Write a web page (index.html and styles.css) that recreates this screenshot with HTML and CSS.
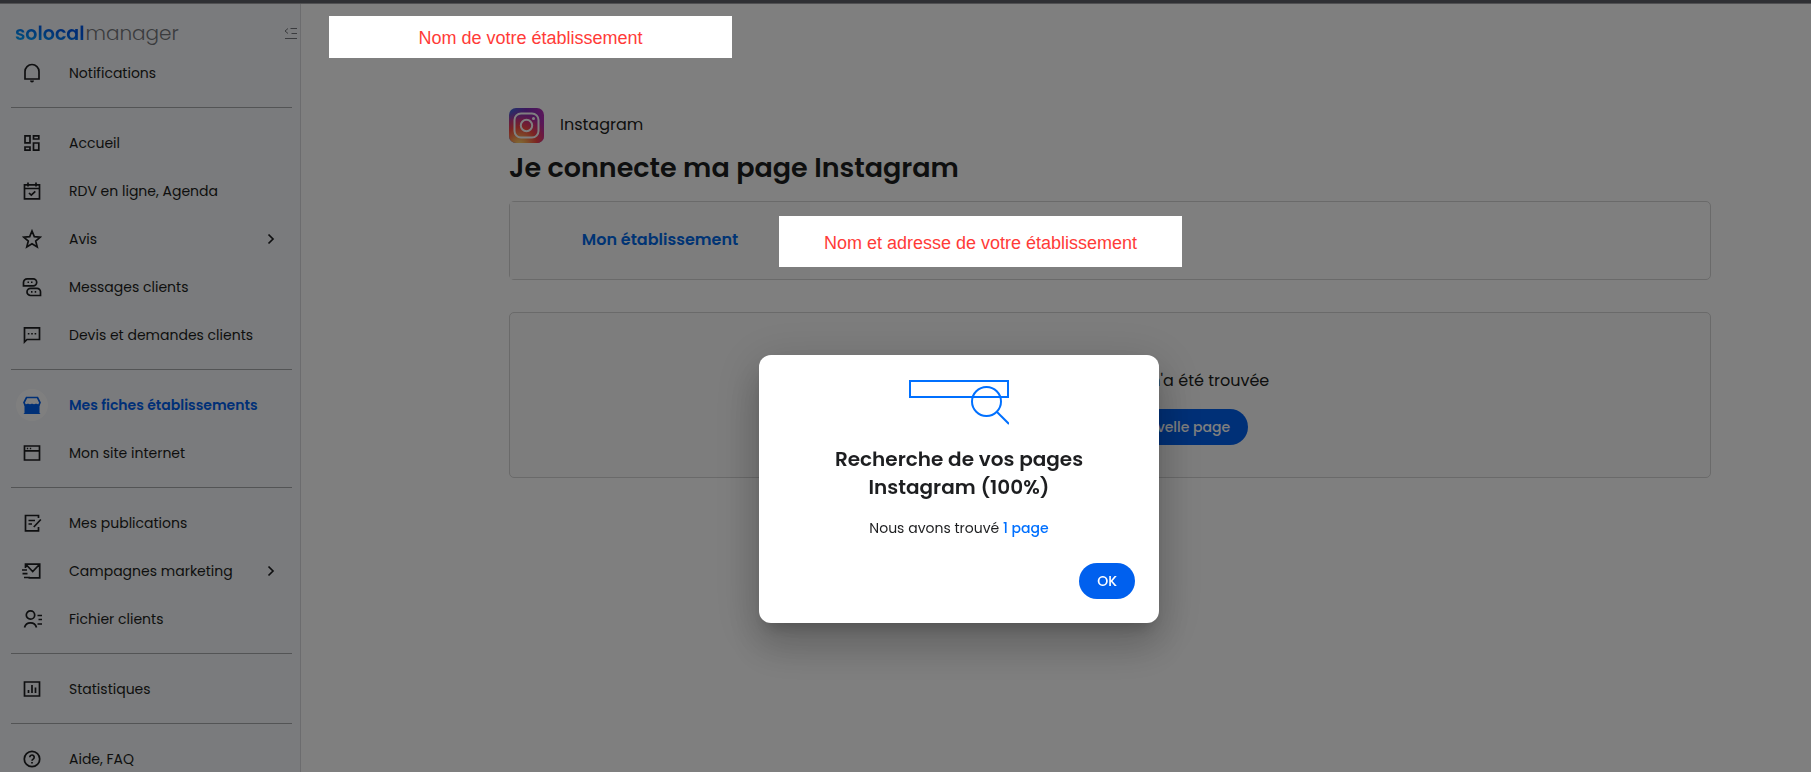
FILE: index.html
```html
<!DOCTYPE html>
<html lang="fr">
<head>
<meta charset="utf-8">
<title>Solocal Manager – Connexion Instagram</title>
<link rel="stylesheet" href="styles.css">
</head>
<body>
<div class="topbar"></div>
<div class="shell">
  <aside class="sidebar">
    <div class="brand">
      <a class="logo" href="#"><span class="logo-bold">solocal</span><span class="logo-light">manager</span></a>
      <button class="collapse" type="button" aria-label="Réduire le menu">
        <svg width="14" height="13" viewBox="0 0 14 13"><path d="M4 1.5 1 4l3 2.500M6.500 1.500H13M7.500 6.500H13M1 11.500h12"/></svg>
      </button>
    </div>
    <nav class="menu">
      <a class="item" href="#"><svg class="icon" viewBox="0 0 20 20"><path d="M3 16V8.500a7 7 0 0 1 14 0V16zM2.500 16h15"/><path class="solid" d="M8 17.500h4a2 2 0 0 1-4 0z"/></svg><span>Notifications</span></a>
      <hr>
      <a class="item" href="#"><svg class="icon" viewBox="0 0 20 20"><path d="M3 2.800h5v7H3zM3 14h5v3.200H3zM11.500 2.800h5.300V6h-5.300zM11.500 10h5.300v7.200h-5.300z"/></svg><span>Accueil</span></a>
      <a class="item" href="#"><svg class="icon" viewBox="0 0 20 20"><path d="M2.500 3.800h15v14h-15zM2.500 7.500h15M6 1.500v4M14 1.500v4M7 12l2.300 2.200 4-3.800"/></svg><span>RDV en ligne, Agenda</span></a>
      <a class="item" href="#"><svg class="icon" viewBox="0 0 20 20"><path d="m10 2 2.300 5.600 6 .5-4.600 3.900 1.500 5.900-5.200-3.200-5.200 3.200L6.300 12 1.700 8.100l6-.5z"/></svg><span>Avis</span><svg class="chevron" viewBox="0 0 8 12"><path d="m1.500 1.500 4.500 4.500-4.500 4.500"/></svg></a>
      <a class="item" href="#"><svg class="icon" viewBox="0 0 20 20"><path d="M1.500 8.800V5.500a3.700 3.700 0 0 1 3.700-3.700h6a3.500 3.500 0 0 1 0 7zM18.500 18.500v-3.700a3.500 3.500 0 0 0-3.500-3.500H8.600a3.600 3.600 0 0 0 0 7.200z"/><path class="solid" d="M5.500 4.500h1.500v1.600H5.500zM9 4.500h1.500v1.600H9zM9 14.100h1.500v1.600H9zM12.700 14.100h1.500v1.600h-1.500z"/></svg><span>Messages clients</span></a>
      <a class="item" href="#"><svg class="icon" viewBox="0 0 20 20"><path d="M2.500 17V2.800h15v11.700H5z"/><path class="solid" d="M5.800 8h1.600v1.600H5.800zM9.200 8h1.600v1.600H9.200zM12.600 8h1.600v1.600h-1.600z"/></svg><span>Devis et demandes clients</span></a>
      <hr>
      <a class="item active" href="#" aria-current="page"><span class="halo"><svg class="icon" viewBox="0 0 20 20"><path d="M4.500 2.500h11l2.500 5-1 2.500H3L2 7.500z"/><path class="solid" d="M2 8.500 3.500 10 6 8.500l2 1.200 2-1.200 2 1.200 2-1.200 2.500 1.500L18 8.500 17.500 11v7.200h.7v.8H1.800v-.8h.7V11z"/></svg></span><span>Mes fiches établissements</span></a>
      <a class="item" href="#"><svg class="icon" viewBox="0 0 20 20"><path d="M2.500 3h15v14h-15zM2.500 7.800h15"/><path class="solid" d="M4.800 4.800h1.400v1.400H4.800zM7.800 4.800h1.400v1.400H7.800z"/></svg><span>Mon site internet</span></a>
      <hr>
      <a class="item" href="#"><svg class="icon" viewBox="0 0 20 20"><path d="M16.500 5V2.500h-13v15.300h13V14M6.500 7.500h6.500M6.500 11h3.500M18.800 6.500l-7 7.500"/></svg><span>Mes publications</span></a>
      <a class="item" href="#"><svg class="icon" viewBox="0 0 20 20"><path d="M3.500 7V3.200h14.200v13.600H6.500M4 3.500l6.700 7 6.700-7M0 9h5M.5 12.700h5M2 16.500h6"/></svg><span>Campagnes marketing</span><svg class="chevron" viewBox="0 0 8 12"><path d="m1.500 1.500 4.500 4.500-4.500 4.500"/></svg></a>
      <a class="item" href="#"><svg class="icon" viewBox="0 0 20 20"><circle cx="8.500" cy="6" r="4.200"/><path d="M2.500 18.500a6.200 6.200 0 0 1 12 0M15.500 6.500h4.500M16.500 10.500h3.500M15.500 15h4.500"/></svg><span>Fichier clients</span></a>
      <hr>
      <a class="item" href="#"><svg class="icon" viewBox="0 0 20 20"><path d="M2.500 3h15v14h-15zM6.500 11v3M10 6v8M13.500 8.500V14"/></svg><span>Statistiques</span></a>
      <hr>
      <a class="item" href="#"><svg class="icon" viewBox="0 0 20 20"><circle cx="10" cy="10" r="7.700"/><path d="M7.800 8.200a2.200 2.200 0 1 1 3.600 1.700c-.9.600-1.400 1-1.400 1.900M10 13v1.500"/></svg><span>Aide, FAQ</span></a>
    </nav>
  </aside>

  <main class="main">
    <div class="note note-name">Nom de votre établissement</div>
    <section class="content">
      <div class="network">
        <svg class="insta" viewBox="0 0 35 35">
          <defs>
            <linearGradient id="ig-top" x1="0" y1="0" x2="1" y2="0"><stop offset="0" stop-color="#4168d8"/><stop offset=".5" stop-color="#7a30b8"/><stop offset="1" stop-color="#b52fb5"/></linearGradient>
            <radialGradient id="ig-warm" cx=".3" cy="1.050" r="1"><stop offset="0" stop-color="#ffdc70"/><stop offset=".22" stop-color="#ffa052"/><stop offset=".5" stop-color="#f84a45"/><stop offset=".72" stop-color="#dd3278" stop-opacity=".85"/><stop offset="1" stop-color="#a52fb5" stop-opacity="0"/></radialGradient>
          </defs>
          <rect width="35" height="35" rx="7" fill="url(#ig-top)"/>
          <rect width="35" height="35" rx="7" fill="url(#ig-warm)"/>
          <rect x="5.500" y="5.500" width="24" height="24" rx="6.500" fill="none" stroke="#fff" stroke-width="2"/>
          <circle cx="17.500" cy="17.500" r="5.700" fill="none" stroke="#fff" stroke-width="2"/>
          <circle cx="24.500" cy="10.500" r="1.500" fill="#fff"/>
        </svg>
        <span class="network-name">Instagram</span>
      </div>
      <h1>Je connecte ma page Instagram</h1>
      <div class="card place">
        <div class="place-label">Mon établissement</div>
        <div class="note note-address">Nom et adresse de votre établissement</div>
      </div>
      <div class="card result">
        <p>Aucune page Instagram n'a été trouvée</p>
        <button class="button" type="button">Se connecter à une nouvelle page</button>
      </div>
    </section>
  </main>
</div>

<div class="overlay">
  <div class="modal" role="dialog" aria-modal="true" aria-labelledby="modal-title">
    <svg class="search-art" viewBox="0 0 100 46"><path d="M1 1h98v16H1z" stroke-width="2"/><circle cx="77.500" cy="21.500" r="14.500" stroke-width="2"/><path d="m88 32 12 12" stroke-width="2"/></svg>
    <h2 id="modal-title">Recherche de vos pages Instagram (100%)</h2>
    <p>Nous avons trouvé <span class="count">1 page</span></p>
    <button class="button ok" type="button">OK</button>
  </div>
</div>
</body>
</html>
```
FILE: styles.css
```css
* {
  box-sizing: border-box;
}

body {
  margin: 0;
  height: 100vh;
  overflow: hidden;
  display: flex;
  flex-direction: column;
  background: #fff;
  color: #1d1e20;
  font: 14px/20px Poppins, Inter, sans-serif;
}

.topbar {
  flex: none;
  height: 4px;
  background: #5e6068;
  border-bottom: 1px solid #a0a0a4;
}

.shell {
  flex: 1;
  min-height: 0;
  display: flex;
}

.sidebar {
  flex: none;
  width: 301px;
  overflow: hidden;
  background: #f4f6fa;
  border-right: 1px solid #d8d9dc;
}

.brand {
  height: 45px;
  padding: 10px 2px 0 15px;
  display: flex;
  align-items: flex-start;
  justify-content: space-between;
}

.logo {
  font-size: 20px;
  line-height: 38px;
  text-decoration: none;
}

.logo-bold {
  font-weight: 600;
  font-size: 19px;
  background: linear-gradient(15deg, #00a0ff 20%, #0058e8 65%);
  background-clip: text;
  color: transparent;
}

.logo-light {
  margin-left: 1px;
  color: #75777c;
  font-weight: 300;
}

.collapse {
  margin-top: 13px;
  padding: 0;
  border: 0;
  background: none;
  display: flex;
}

.collapse svg {
  fill: none;
  stroke: #75777c;
}

.item {
  height: 48px;
  padding: 0 25px 0 22px;
  display: flex;
  align-items: center;
  gap: 27px;
  color: inherit;
  text-decoration: none;
}

.icon {
  flex: none;
  width: 20px;
  height: 20px;
  fill: none;
  stroke: currentColor;
  stroke-width: 1.7;
}

.icon .solid {
  fill: currentColor;
  stroke: none;
}

.chevron {
  width: 8px;
  height: 12px;
  margin-left: auto;
  fill: none;
  stroke: currentColor;
  stroke-width: 1.7;
}

.active {
  padding-left: 16px;
  gap: 21px;
  color: #0060ee;
  font-weight: 600;
}

.halo {
  width: 32px;
  height: 32px;
  border-radius: 50%;
  background: #fff;
  display: grid;
  place-items: center;
}

.menu hr {
  height: 1px;
  margin: 10px 8px 11px 11px;
  border: 0;
  background: #a6a8ab;
}

.main {
  flex: 1;
  min-width: 0;
  padding: 12px 100px 0 28px;
}

.note {
  position: relative;
  z-index: 2;
  width: 403px;
  padding-top: 2px;
  display: grid;
  place-items: center;
  background: #fff;
  color: #ff3b38;
  font: 18px/24px "Liberation Sans", Arial, sans-serif;
}

.note-name {
  height: 42px;
}

.content {
  padding: 50px 0 0 180px;
}

.network {
  display: flex;
  align-items: center;
  gap: 16px;
  font-size: 16px;
}

.network-name {
  padding-bottom: 2px;
}

.insta {
  width: 35px;
  height: 35px;
}

h1 {
  margin: 8px 0 16px;
  font-size: 27px;
  line-height: 34px;
  font-weight: 600;
}

.card {
  border: 1px solid #d4d4d4;
  border-radius: 5px;
}

.place {
  height: 79px;
  display: flex;
  align-items: flex-start;
}

.place-label {
  width: 300px;
  align-self: stretch;
  padding-bottom: 2px;
  display: grid;
  place-items: center;
  background: #fbfbfb;
  color: #0068e8;
  font-size: 16px;
  font-weight: 600;
}

.note-address {
  height: 51px;
  margin: 14px 0 0 -31px;
}

.result {
  height: 166px;
  margin-top: 32px;
  padding-top: 56px;
  display: flex;
  flex-direction: column;
  align-items: center;
  background: #fbfbfb;
}

.result p {
  margin: 0 0 16px;
  font-size: 16px;
  line-height: 24px;
}

.button {
  flex: none;
  height: 36px;
  padding: 0 18px;
  border: 0;
  border-radius: 18px;
  background: #0060ee;
  color: #fff;
  font: inherit;
  font-weight: 500;
}

.overlay {
  position: fixed;
  inset: 0;
  z-index: 1;
  padding: 355px 0 0 107px;
  display: flex;
  align-items: flex-start;
  justify-content: center;
  background: rgba(0, 0, 0, 0.5);
}

.modal {
  width: 400px;
  padding: 25px 24px 24px;
  display: flex;
  flex-direction: column;
  align-items: center;
  border-radius: 12px;
  background: #fff;
  text-align: center;
  box-shadow: 0 11px 15px -7px rgba(0, 0, 0, 0.2), 0 24px 38px 3px rgba(0, 0, 0, 0.14), 0 9px 46px 8px rgba(0, 0, 0, 0.12);
}

.search-art {
  width: 100px;
  height: 46px;
  fill: none;
  stroke: #0070ff;
}

.modal h2 {
  width: 280px;
  margin: 19px 0 17px;
  font-size: 20px;
  line-height: 28px;
  font-weight: 600;
}

.modal p {
  margin: 0 0 25px;
}

.count {
  color: #0070ff;
  font-weight: 500;
}

.ok {
  align-self: flex-end;
}
```
